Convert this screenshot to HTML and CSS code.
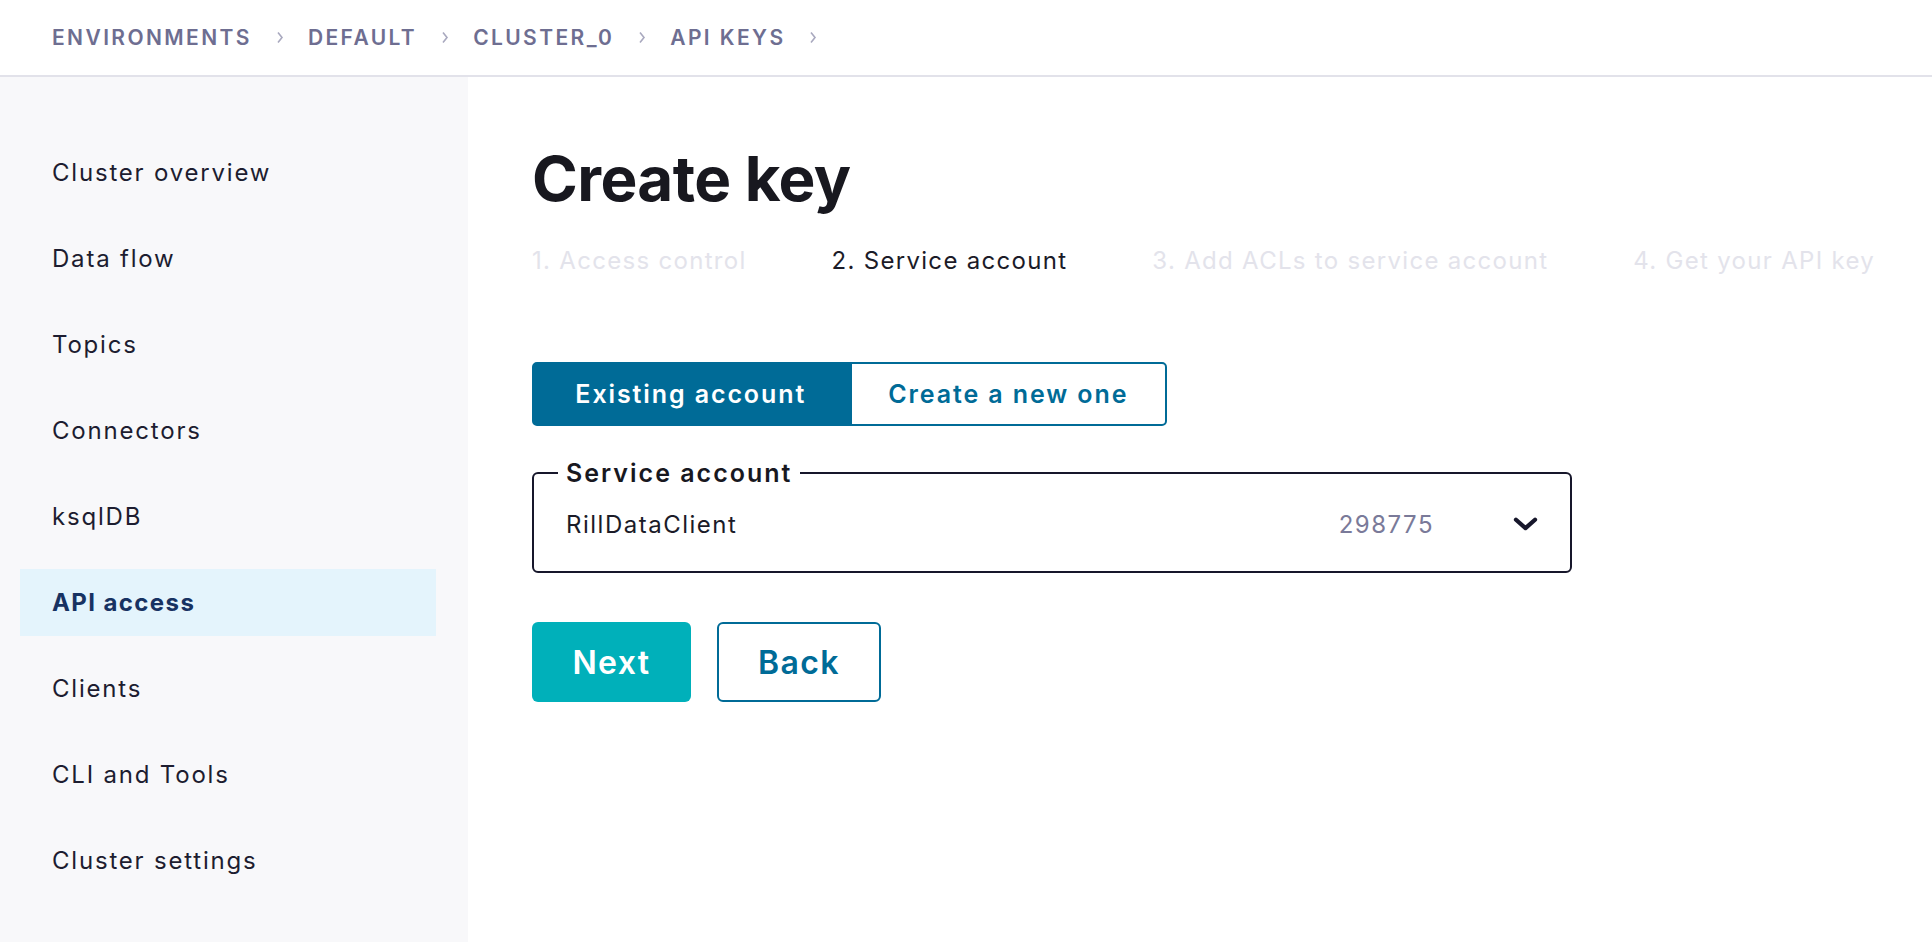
FILE: index.html
```html
<!DOCTYPE html>
<html lang="en">
<head>
  <meta charset="UTF-8" />
  <meta name="viewport" content="width=device-width, initial-scale=1.0"/>
  <title>Create key</title>
  <link rel="stylesheet" href="styles.css">
</head>
<body>
  <header class="topbar">
    <nav class="crumbs">
      <a href="#">Environments</a>
      <svg class="crumb-sep" viewBox="0 0 10 16"><path d="M3 3 L7 8 L3 13"/></svg>
      <a href="#">Default</a>
      <svg class="crumb-sep" viewBox="0 0 10 16"><path d="M3 3 L7 8 L3 13"/></svg>
      <a href="#">Cluster_0</a>
      <svg class="crumb-sep" viewBox="0 0 10 16"><path d="M3 3 L7 8 L3 13"/></svg>
      <a href="#">API keys</a>
      <svg class="crumb-sep" viewBox="0 0 10 16"><path d="M3 3 L7 8 L3 13"/></svg>
    </nav>
  </header>

  <div class="layout">
    <aside class="sidebar">
      <ul class="side-nav">
        <li><a href="#">Cluster overview</a></li>
        <li><a href="#">Data flow</a></li>
        <li><a href="#">Topics</a></li>
        <li><a href="#">Connectors</a></li>
        <li><a href="#">ksqlDB</a></li>
        <li class="active"><a href="#">API access</a></li>
        <li><a href="#">Clients</a></li>
        <li><a href="#">CLI and Tools</a></li>
        <li><a href="#">Cluster settings</a></li>
      </ul>
    </aside>

    <main class="content">
      <h1 class="title">Create key</h1>

      <ol class="steps">
        <li>1. Access control</li>
        <li class="current">2. Service account</li>
        <li>3. Add ACLs to service account</li>
        <li>4. Get your API key</li>
      </ol>

      <div class="toggle">
        <button class="toggle-btn selected">Existing account</button>
        <button class="toggle-btn">Create a new one</button>
      </div>

      <fieldset class="select-field">
        <legend>Service account</legend>
        <div class="select-row">
          <span class="select-name">RillDataClient</span>
          <span class="select-id">298775</span>
          <svg class="select-arrow" viewBox="0 0 24 16"><path d="M4 4 L12 11 L20 4"/></svg>
        </div>
      </fieldset>

      <div class="actions">
        <button class="btn btn-primary">Next</button>
        <button class="btn btn-outline">Back</button>
      </div>
    </main>
  </div>
</body>
</html>
```

FILE: styles.css
```css
:root {
  --ink: #17172b;
  --muted: #6e6e91;
  --blue: #006b97;
  --teal: #00b0ba;
  --line: #e2e2ea;
}

* {
  margin: 0;
  padding: 0;
  box-sizing: border-box;
}

body {
  font-family: Inter, 'Noto Sans', sans-serif;
  color: var(--ink);
  background: #fff;
  height: 942px;
  overflow: hidden;
}

a {
  color: inherit;
  text-decoration: none;
}

/* top bar */
.topbar {
  height: 77px;
  border-bottom: 2px solid var(--line);
  display: flex;
  align-items: center;
  padding-left: 52px;
}

.crumbs {
  display: flex;
  align-items: center;
  gap: 23px;
}

.crumbs a {
  font-size: 21px;
  font-weight: 600;
  letter-spacing: 2.4px;
  text-transform: uppercase;
  color: var(--muted);
}

.crumb-sep {
  width: 10px;
  height: 17px;
  fill: none;
  stroke: #a9a9bf;
  stroke-width: 1.6;
}

/* layout */
.layout {
  display: flex;
  height: calc(942px - 77px);
}

.sidebar {
  width: 468px;
  background: #f8f8fa;
  padding: 62px 32px 0 20px;
}

.side-nav {
  list-style: none;
  display: flex;
  flex-direction: column;
  gap: 19px;
}

.side-nav li {
  height: 67px;
  display: flex;
  align-items: center;
  padding-left: 32px;
}

.side-nav a {
  font-size: 24px;
  letter-spacing: 1.8px;
  color: #1d1d30;
}

.side-nav li.active {
  background: #e4f4fc;
}

.side-nav li.active a {
  font-weight: 700;
  letter-spacing: 1.4px;
  color: #173262;
}

/* main */
.content {
  flex: 1;
  padding-left: 64px;
}

.title {
  margin-top: 66px;
  font-size: 62px;
  line-height: 72px;
  font-weight: 700;
  letter-spacing: -0.6px;
  color: #18181f;
}

.steps {
  list-style: none;
  display: flex;
  gap: 85px;
  margin-top: 31px;
  font-size: 24px;
  line-height: 30px;
  letter-spacing: 1.3px;
  color: #e3e3eb;
}

.steps li.current {
  color: #1b1b28;
}

.toggle {
  display: flex;
  margin-top: 86px;
  width: 635px;
  height: 64px;
}

.toggle-btn {
  flex: 1;
  font-family: inherit;
  font-size: 25px;
  font-weight: 600;
  letter-spacing: 1.9px;
  border: 2px solid var(--blue);
  background: #fff;
  color: var(--blue);
  cursor: pointer;
}

.toggle-btn:first-child {
  border-radius: 5px 0 0 5px;
}

.toggle-btn:last-child {
  border-radius: 0 5px 5px 0;
}

.toggle-btn.selected {
  background: var(--blue);
  color: #fff;
}

.select-field {
  margin-top: 32px;
  width: 1040px;
  border: 2px solid var(--ink);
  border-radius: 6px;
  padding: 0 30px 11px 32px;
}

.select-field legend {
  padding: 0 8px;
  margin-left: -8px;
  font-size: 25px;
  line-height: 30px;
  font-weight: 600;
  letter-spacing: 2px;
  color: #18181f;
}

.select-row {
  display: flex;
  align-items: center;
  height: 72px;
  font-size: 24px;
  letter-spacing: 1.5px;
}

.select-name {
  flex: 1;
  color: #1b1b28;
}

.select-id {
  color: #7a7a99;
  margin-right: 77px;
}

.select-arrow {
  width: 29px;
  height: 19px;
  fill: none;
  stroke: var(--ink);
  stroke-width: 3.6;
  stroke-linecap: round;
  stroke-linejoin: round;
}

.actions {
  display: flex;
  gap: 26px;
  margin-top: 49px;
}

.btn {
  height: 80px;
  border-radius: 6px;
  font-family: inherit;
  font-size: 32px;
  font-weight: 600;
  letter-spacing: 1.4px;
  cursor: pointer;
}

.btn-primary {
  width: 159px;
  background: var(--teal);
  border: none;
  color: #fff;
}

.btn-outline {
  width: 164px;
  background: #fff;
  border: 2px solid var(--blue);
  color: var(--blue);
}
```
